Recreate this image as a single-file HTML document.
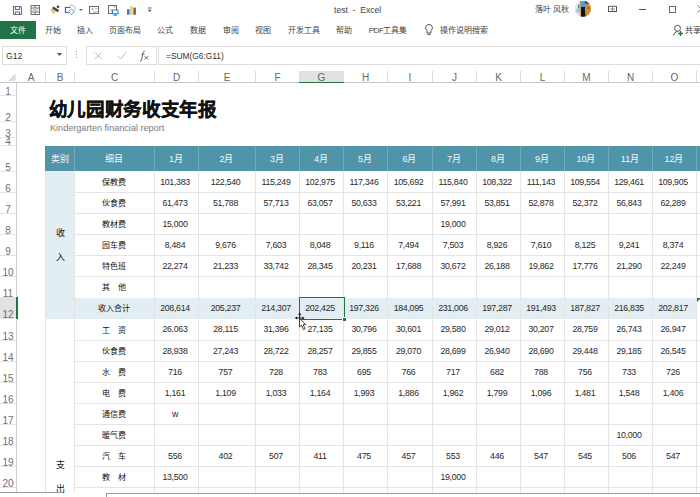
<!DOCTYPE html>
<html lang="zh-CN"><head><meta charset="utf-8">
<style>
*{margin:0;padding:0;box-sizing:border-box}
html,body{width:700px;height:497px;overflow:hidden;background:#fff}
body{position:relative;font-family:"Liberation Sans",sans-serif;color:#444}
.a{position:absolute}
.t{position:absolute;white-space:nowrap;line-height:1}
.vl{position:absolute;width:1px}
.hl{position:absolute;height:1px}
.c{position:absolute;display:flex;align-items:center;justify-content:center;white-space:nowrap}
.num{font-size:8.8px;color:#2a2a2a;letter-spacing:-0.3px;padding-right:2px}
.lab{font-size:8px;color:#111}
.hdr{font-size:9px;color:#f4f8fa}
.colh{font-size:10px;color:#666;padding-top:2.5px;padding-left:1px}
.rowh{font-size:10px;color:#707070}
.tab{position:absolute;top:25px;font-size:8.5px;color:#444;white-space:nowrap;line-height:1}
</style></head><body>

<div class="t" style="left:334px;top:5.5px;font-size:8.6px;color:#444">test&nbsp; -&nbsp; Excel</div>
<div class="t" style="left:535px;top:5.5px;font-size:8px;color:#444">落叶 风秋</div>
<svg class="a" style="left:575px;top:1px;display:block" width="16" height="16"><defs><clipPath id="av"><circle cx="8" cy="7.8" r="8"/></clipPath></defs>
<g clip-path="url(#av)"><rect width="16" height="16" fill="#d9b27a"/>
<rect x="0" y="0" width="5" height="16" fill="#dfe7ee"/>
<path d="M1 8 l3 -1 l1 3 l-3 2z" fill="#9cc3e6"/><path d="M3 4 l2 0 l0 2 l-2 1z" fill="#5a5a6a"/>
<path d="M3.5 2 L5 16 H8 L7 6 Z" fill="#d6a560"/>
<rect x="5.5" y="0" width="5" height="6.5" fill="#4b9de0"/>
<path d="M6 6 h4.5 l0.5 10 h-5z" fill="#151515"/>
<rect x="10" y="0" width="6" height="3" fill="#2a3550"/>
<path d="M10 2.5 q5 -0.5 6 4 v9 h-5.5 q-1 -6 -0.5 -13z" fill="#d48c3c"/>
<circle cx="13.5" cy="7" r="0.7" fill="#3a2a20"/>
</g></svg>
<svg class="a" style="left:608px;top:5px;display:block" width="10" height="8"><rect x="0.5" y="1.5" width="8" height="5" fill="none" stroke="#5a5258"/><line x1="0.5" y1="0.8" x2="8.5" y2="0.8" stroke="#c9d9d4"/><path d="M2 4 l1.5 -1 v2z M7 4 l-1.5 -1 v2z" fill="#777"/><line x1="4.5" y1="2" x2="4.5" y2="6" stroke="#666" stroke-width="0.8"/></svg>
<div class="a" style="left:639px;top:9px;width:7px;height:1px;background:#555"></div>
<div class="a" style="left:669px;top:6px;width:6.5px;height:6.5px;border:1px solid #6a6a6a"></div>
<svg class="a" style="left:697px;top:5px;display:block" width="8" height="8"><path d="M0.5 0.5L7.5 7.5M7.5 0.5L0.5 7.5" stroke="#777" stroke-width="0.9"/></svg>
<svg class="a" style="left:0;top:0;display:block" width="160" height="20">
<g fill="none" stroke="#6d6f85" stroke-width="1.1">
<path d="M13.5 6.5 h7 l1 1 v7 h-8z"/><path d="M15.5 6.5 v3 h4 v-3"/><path d="M15.5 14.5 v-2.5 h4 v2.5"/>
</g>
<g fill="none" stroke="#707070" stroke-width="1">
<rect x="31" y="5.5" width="8.5" height="9"/><line x1="31" y1="8" x2="39.5" y2="8"/><line x1="31" y1="12" x2="39.5" y2="12"/>
<line x1="35" y1="5.5" x2="35" y2="8"/><line x1="35" y1="12" x2="35" y2="14.5"/>
</g>
<line x1="32.5" y1="10" x2="38" y2="10" stroke="#6aa8dc" stroke-width="1"/>
<path d="M49.8 9.5 L53 8.6 L56 11.8 L53.4 14.6 Z" fill="#f0c986"/>
<path d="M53.6 8.2 L57.6 10.6" stroke="#46504e" stroke-width="2.6" stroke-linecap="round"/>
<circle cx="58" cy="6.8" r="1.3" fill="#3c3f48"/>
<path d="M70.5 7.5 h-5 v5 h3" fill="none" stroke="#2e68ad" stroke-width="1.2"/>
<path d="M69 6.5 a3.4 3.4 0 1 1 5.5 4" fill="none" stroke="#8cbde0" stroke-width="1"/>
<path d="M71.4 8.8 l2.9 2.9 l-2.9 2.9 l-2.9 -2.9z" fill="none" stroke="#4b8fcf" stroke-width="0.9"/>
<path d="M79 9 l2 2 l2 -2z" fill="#666"/>
<rect x="89.5" y="6.5" width="9" height="7" fill="none" stroke="#6b6b6b"/><path d="M91 9.5 l1.5 -1.5 l1.5 1.5z" fill="#4a8fd0"/><line x1="93" y1="12" x2="97.5" y2="12" stroke="#aaa"/><line x1="95" y1="8.5" x2="97.5" y2="8.5" stroke="#bbb"/>
<rect x="108.5" y="5.5" width="8" height="8" fill="none" stroke="#6b6b6b"/><rect x="113.5" y="6.3" width="2" height="1.5" fill="#f2b36b"/><rect x="110" y="9" width="2" height="3" fill="#b9d5ee"/>
<rect x="112.5" y="10" width="5.5" height="3.8" fill="#fff" stroke="#2f7fc4" stroke-width="1"/><line x1="115.2" y1="14" x2="115.2" y2="15.2" stroke="#2f7fc4"/><line x1="113.5" y1="15.2" x2="117" y2="15.2" stroke="#2f7fc4"/>
<rect x="127" y="9.2" width="2.6" height="5.5" fill="#3e7fbf"/><rect x="130.1" y="6" width="2.8" height="8.7" fill="#f0cf8c"/><rect x="133.4" y="7.6" width="2.5" height="7.1" fill="#5f6b6a"/>
<line x1="148" y1="8" x2="151.5" y2="8" stroke="#666"/><path d="M147.7 9.8 l2 2.2 l2 -2.2z" fill="#555"/>
</svg>
<div class="a" style="left:0;top:21px;width:36px;height:18px;background:#217346"></div>
<div class="t" style="left:9.5px;top:26.5px;font-size:8px;color:#fff">文件</div>
<div class="t" style="left:44.7px;top:26.5px;font-size:8px;color:#444;">开始</div>
<div class="t" style="left:76.7px;top:26.5px;font-size:8px;color:#444;">插入</div>
<div class="t" style="left:109.2px;top:26.5px;font-size:8px;color:#444;">页面布局</div>
<div class="t" style="left:157.2px;top:26.5px;font-size:8px;color:#444;">公式</div>
<div class="t" style="left:190.2px;top:26.5px;font-size:8px;color:#444;">数据</div>
<div class="t" style="left:223.2px;top:26.5px;font-size:8px;color:#444;">审阅</div>
<div class="t" style="left:255.2px;top:26.5px;font-size:8px;color:#444;">视图</div>
<div class="t" style="left:288.2px;top:26.5px;font-size:8px;color:#444;">开发工具</div>
<div class="t" style="left:336.2px;top:26.5px;font-size:8px;color:#444;">帮助</div>
<div class="t" style="left:368.7px;top:26.5px;font-size:8px;color:#444;letter-spacing:-0.4px;">PDF工具集</div>
<div class="t" style="left:440.2px;top:26.5px;font-size:8px;color:#444;">操作说明搜索</div>
<svg class="a" style="left:424px;top:23px" width="10" height="14"><path d="M5 1.5 a3.3 3.3 0 0 1 2 6 v2.5 h-4 v-2.5 a3.3 3.3 0 0 1 2 -6z" fill="none" stroke="#555"/><line x1="3.5" y1="11.5" x2="6.5" y2="11.5" stroke="#555"/></svg>
<svg class="a" style="left:672px;top:23px;display:block" width="14" height="14"><circle cx="5.5" cy="5.3" r="3" fill="none" stroke="#3c4650" stroke-width="0.9"/><path d="M1.3 12.5 q1 -3.5 4.2 -4.2" fill="none" stroke="#3c4650" stroke-width="0.9"/><path d="M8.5 8 v5 M6 10.5 h5" stroke="#217346" stroke-width="1.3"/></svg>
<div class="t" style="left:685px;top:26.5px;font-size:8px;color:#333">共享</div>
<div class="a" style="left:2px;top:46px;width:65px;height:19px;border:1px solid #dcdcdc;background:#fff"></div>
<div class="t" style="left:6px;top:52px;font-size:8.6px;color:#333">G12</div>
<svg class="a" style="left:57px;top:53px" width="6" height="4"><path d="M0 0 h5 l-2.5 3z" fill="#555"/></svg>
<div class="a" style="left:76px;top:51px;width:1px;height:9px;background:repeating-linear-gradient(#999 0 1px,transparent 1px 3px)"></div>
<div class="a" style="left:86px;top:46px;width:71px;height:19px;border:1px solid #dcdcdc;background:#fff"></div>
<svg class="a" style="left:94px;top:51px" width="60" height="10"><path d="M1 1.5 L7.5 8 M7.5 1.5 L1 8" stroke="#bdbdbd" stroke-width="1"/><path d="M23.5 5 L26.5 8 L32 1.5" fill="none" stroke="#bdbdbd" stroke-width="1"/></svg>
<svg class="a" style="left:139px;top:50px;display:block" width="12" height="12"><path d="M5.8 1.2 q-1.3 -0.3 -1.7 1.3 l-1.6 7.4 q-0.4 1.6 -1.6 1.2" fill="none" stroke="#555" stroke-width="0.9"/><line x1="2.5" y1="4.3" x2="5.8" y2="4.3" stroke="#555" stroke-width="0.8"/><path d="M5.5 6 l3.5 3.6 M9.2 6 l-3.8 3.6" stroke="#666" stroke-width="0.9"/></svg>
<div class="a" style="left:158px;top:46px;width:560px;height:19px;border:1px solid #dcdcdc;background:#fff"></div>
<div class="t" style="left:166px;top:52px;font-size:8.4px;color:#333">=SUM(G6:G11)</div>
<svg class="a" style="left:7px;top:73px;display:block" width="10" height="9"><path d="M8.5 0.5 V8 H1z" fill="#dcdcdc"/></svg>
<div class="hl" style="left:0;top:82px;width:700px;background:#c6c6c6"></div>
<div class="vl" style="left:45px;top:71px;height:11px;background:#dadada"></div>
<div class="vl" style="left:74px;top:71px;height:11px;background:#dadada"></div>
<div class="vl" style="left:154px;top:71px;height:11px;background:#dadada"></div>
<div class="vl" style="left:198px;top:71px;height:11px;background:#dadada"></div>
<div class="vl" style="left:255px;top:71px;height:11px;background:#dadada"></div>
<div class="vl" style="left:299px;top:71px;height:11px;background:#dadada"></div>
<div class="vl" style="left:343px;top:71px;height:11px;background:#dadada"></div>
<div class="vl" style="left:387px;top:71px;height:11px;background:#dadada"></div>
<div class="vl" style="left:432px;top:71px;height:11px;background:#dadada"></div>
<div class="vl" style="left:476px;top:71px;height:11px;background:#dadada"></div>
<div class="vl" style="left:520px;top:71px;height:11px;background:#dadada"></div>
<div class="vl" style="left:564px;top:71px;height:11px;background:#dadada"></div>
<div class="vl" style="left:608px;top:71px;height:11px;background:#dadada"></div>
<div class="vl" style="left:652px;top:71px;height:11px;background:#dadada"></div>
<div class="vl" style="left:696px;top:71px;height:11px;background:#dadada"></div>
<div class="a" style="left:299.2px;top:71px;width:44.5px;height:12px;background:#e1e1e1;border-bottom:1.5px solid #217346"></div>
<div class="c colh" style="left:16px;top:71px;width:29px;height:11px">A</div>
<div class="c colh" style="left:45px;top:71px;width:29px;height:11px">B</div>
<div class="c colh" style="left:74px;top:71px;width:80px;height:11px">C</div>
<div class="c colh" style="left:154px;top:71px;width:44px;height:11px">D</div>
<div class="c colh" style="left:198px;top:71px;width:57px;height:11px">E</div>
<div class="c colh" style="left:255px;top:71px;width:44px;height:11px">F</div>
<div class="c colh" style="left:299px;top:71px;width:44px;height:11px">G</div>
<div class="c colh" style="left:343px;top:71px;width:44px;height:11px">H</div>
<div class="c colh" style="left:387px;top:71px;width:45px;height:11px">I</div>
<div class="c colh" style="left:432px;top:71px;width:44px;height:11px">J</div>
<div class="c colh" style="left:476px;top:71px;width:44px;height:11px">K</div>
<div class="c colh" style="left:520px;top:71px;width:44px;height:11px">L</div>
<div class="c colh" style="left:564px;top:71px;width:44px;height:11px">M</div>
<div class="c colh" style="left:608px;top:71px;width:44px;height:11px">N</div>
<div class="c colh" style="left:652px;top:71px;width:44px;height:11px">O</div>
<div class="c colh" style="left:696px;top:71px;width:44px;height:11px">P</div>
<div class="vl" style="left:16px;top:82px;height:420px;background:#cdcdcd"></div>
<div class="a" style="left:0;top:298px;width:16px;height:21px;background:#e1e1e1"></div>
<div class="hl" style="left:0;top:95px;width:16px;background:#e4e4e4"></div>
<div class="t rowh" style="left:0;width:16px;text-align:center;top:86.5px">1</div>
<div class="hl" style="left:0;top:121px;width:16px;background:#e4e4e4"></div>
<div class="t rowh" style="left:0;width:16px;text-align:center;top:112.5px">2</div>
<div class="hl" style="left:0;top:137px;width:16px;background:#e4e4e4"></div>
<div class="t rowh" style="left:0;width:16px;text-align:center;top:128.5px">3</div>
<div class="hl" style="left:0;top:145px;width:16px;background:#e4e4e4"></div>
<div class="t rowh" style="left:0;width:16px;text-align:center;top:136.5px">4</div>
<div class="hl" style="left:0;top:171px;width:16px;background:#e4e4e4"></div>
<div class="t rowh" style="left:0;width:16px;text-align:center;top:162.5px">5</div>
<div class="hl" style="left:0;top:192px;width:16px;background:#e4e4e4"></div>
<div class="t rowh" style="left:0;width:16px;text-align:center;top:183.5px">6</div>
<div class="hl" style="left:0;top:213px;width:16px;background:#e4e4e4"></div>
<div class="t rowh" style="left:0;width:16px;text-align:center;top:204.5px">7</div>
<div class="hl" style="left:0;top:234px;width:16px;background:#e4e4e4"></div>
<div class="t rowh" style="left:0;width:16px;text-align:center;top:225.5px">8</div>
<div class="hl" style="left:0;top:255px;width:16px;background:#e4e4e4"></div>
<div class="t rowh" style="left:0;width:16px;text-align:center;top:246.5px">9</div>
<div class="hl" style="left:0;top:276px;width:16px;background:#e4e4e4"></div>
<div class="t rowh" style="left:0;width:16px;text-align:center;top:267.5px">10</div>
<div class="hl" style="left:0;top:297px;width:16px;background:#e4e4e4"></div>
<div class="t rowh" style="left:0;width:16px;text-align:center;top:288.5px">11</div>
<div class="hl" style="left:0;top:318px;width:16px;background:#e4e4e4"></div>
<div class="t rowh" style="left:0;width:16px;text-align:center;top:309.5px">12</div>
<div class="hl" style="left:0;top:340px;width:16px;background:#e4e4e4"></div>
<div class="t rowh" style="left:0;width:16px;text-align:center;top:331.5px">13</div>
<div class="hl" style="left:0;top:361px;width:16px;background:#e4e4e4"></div>
<div class="t rowh" style="left:0;width:16px;text-align:center;top:352.5px">14</div>
<div class="hl" style="left:0;top:382px;width:16px;background:#e4e4e4"></div>
<div class="t rowh" style="left:0;width:16px;text-align:center;top:373.5px">15</div>
<div class="hl" style="left:0;top:403px;width:16px;background:#e4e4e4"></div>
<div class="t rowh" style="left:0;width:16px;text-align:center;top:394.5px">16</div>
<div class="hl" style="left:0;top:424px;width:16px;background:#e4e4e4"></div>
<div class="t rowh" style="left:0;width:16px;text-align:center;top:415.5px">17</div>
<div class="hl" style="left:0;top:445px;width:16px;background:#e4e4e4"></div>
<div class="t rowh" style="left:0;width:16px;text-align:center;top:436.5px">18</div>
<div class="hl" style="left:0;top:466px;width:16px;background:#e4e4e4"></div>
<div class="t rowh" style="left:0;width:16px;text-align:center;top:457.5px">19</div>
<div class="hl" style="left:0;top:487px;width:16px;background:#e4e4e4"></div>
<div class="t rowh" style="left:0;width:16px;text-align:center;top:478.5px">20</div>
<div class="hl" style="left:0;top:508px;width:16px;background:#e4e4e4"></div>
<div class="t rowh" style="left:0;width:16px;text-align:center;top:499.5px">21</div>
<div class="t" style="left:48.5px;top:101px;font-size:18.5px;font-weight:bold;color:#111;letter-spacing:-0.3px;-webkit-text-stroke:0.35px #111">幼儿园财务收支年报</div>
<div class="t" style="left:50px;top:124px;font-size:9.1px;color:#7a7a7a">Kindergarten financial report</div>
<div class="a" style="left:45px;top:146px;width:655px;height:25px;background:#4f94a9"></div>
<div class="vl" style="left:74px;top:146px;height:25px;background:#74aabb"></div>
<div class="vl" style="left:154px;top:146px;height:25px;background:#74aabb"></div>
<div class="vl" style="left:198px;top:146px;height:25px;background:#74aabb"></div>
<div class="vl" style="left:255px;top:146px;height:25px;background:#74aabb"></div>
<div class="vl" style="left:299px;top:146px;height:25px;background:#74aabb"></div>
<div class="vl" style="left:343px;top:146px;height:25px;background:#74aabb"></div>
<div class="vl" style="left:387px;top:146px;height:25px;background:#74aabb"></div>
<div class="vl" style="left:432px;top:146px;height:25px;background:#74aabb"></div>
<div class="vl" style="left:476px;top:146px;height:25px;background:#74aabb"></div>
<div class="vl" style="left:520px;top:146px;height:25px;background:#74aabb"></div>
<div class="vl" style="left:564px;top:146px;height:25px;background:#74aabb"></div>
<div class="vl" style="left:608px;top:146px;height:25px;background:#74aabb"></div>
<div class="vl" style="left:652px;top:146px;height:25px;background:#74aabb"></div>
<div class="vl" style="left:696px;top:146px;height:25px;background:#74aabb"></div>
<div class="c hdr" style="left:45px;top:146px;width:29px;height:25px">类别</div>
<div class="c hdr" style="left:74px;top:146px;width:80px;height:25px">细目</div>
<div class="c hdr" style="left:154px;top:146px;width:44px;height:25px">1月</div>
<div class="c hdr" style="left:198px;top:146px;width:57px;height:25px">2月</div>
<div class="c hdr" style="left:255px;top:146px;width:44px;height:25px">3月</div>
<div class="c hdr" style="left:299px;top:146px;width:44px;height:25px">4月</div>
<div class="c hdr" style="left:343px;top:146px;width:44px;height:25px">5月</div>
<div class="c hdr" style="left:387px;top:146px;width:45px;height:25px">6月</div>
<div class="c hdr" style="left:432px;top:146px;width:44px;height:25px">7月</div>
<div class="c hdr" style="left:476px;top:146px;width:44px;height:25px">8月</div>
<div class="c hdr" style="left:520px;top:146px;width:44px;height:25px">9月</div>
<div class="c hdr" style="left:564px;top:146px;width:44px;height:25px">10月</div>
<div class="c hdr" style="left:608px;top:146px;width:44px;height:25px">11月</div>
<div class="c hdr" style="left:652px;top:146px;width:44px;height:25px">12月</div>
<div class="a" style="left:45px;top:171px;width:29px;height:148px;background:#e3eef3"></div>
<div class="hl" style="left:74px;top:192px;width:626px;background:#e4e4e4"></div>
<div class="hl" style="left:74px;top:213px;width:626px;background:#e4e4e4"></div>
<div class="hl" style="left:74px;top:234px;width:626px;background:#e4e4e4"></div>
<div class="hl" style="left:74px;top:255px;width:626px;background:#e4e4e4"></div>
<div class="hl" style="left:74px;top:276px;width:626px;background:#e4e4e4"></div>
<div class="hl" style="left:74px;top:340px;width:626px;background:#e4e4e4"></div>
<div class="hl" style="left:74px;top:361px;width:626px;background:#e4e4e4"></div>
<div class="hl" style="left:74px;top:382px;width:626px;background:#e4e4e4"></div>
<div class="hl" style="left:74px;top:403px;width:626px;background:#e4e4e4"></div>
<div class="hl" style="left:74px;top:424px;width:626px;background:#e4e4e4"></div>
<div class="hl" style="left:74px;top:445px;width:626px;background:#e4e4e4"></div>
<div class="hl" style="left:74px;top:466px;width:626px;background:#e4e4e4"></div>
<div class="hl" style="left:74px;top:487px;width:626px;background:#e4e4e4"></div>
<div class="hl" style="left:74px;top:508px;width:626px;background:#e4e4e4"></div>
<div class="vl" style="left:45px;top:171px;height:330px;background:#e4e4e4"></div>
<div class="vl" style="left:74px;top:171px;height:330px;background:#e4e4e4"></div>
<div class="vl" style="left:154px;top:171px;height:330px;background:#e4e4e4"></div>
<div class="vl" style="left:198px;top:171px;height:330px;background:#e4e4e4"></div>
<div class="vl" style="left:255px;top:171px;height:330px;background:#e4e4e4"></div>
<div class="vl" style="left:299px;top:171px;height:330px;background:#e4e4e4"></div>
<div class="vl" style="left:343px;top:171px;height:330px;background:#e4e4e4"></div>
<div class="vl" style="left:387px;top:171px;height:330px;background:#e4e4e4"></div>
<div class="vl" style="left:432px;top:171px;height:330px;background:#e4e4e4"></div>
<div class="vl" style="left:476px;top:171px;height:330px;background:#e4e4e4"></div>
<div class="vl" style="left:520px;top:171px;height:330px;background:#e4e4e4"></div>
<div class="vl" style="left:564px;top:171px;height:330px;background:#e4e4e4"></div>
<div class="vl" style="left:608px;top:171px;height:330px;background:#e4e4e4"></div>
<div class="vl" style="left:652px;top:171px;height:330px;background:#e4e4e4"></div>
<div class="vl" style="left:696px;top:171px;height:330px;background:#e4e4e4"></div>
<div class="a" style="left:75px;top:298px;width:621px;height:21px;background:#e3eef3"></div>
<div class="vl" style="left:154px;top:298px;height:21px;background:#e2e5e7"></div>
<div class="vl" style="left:198px;top:298px;height:21px;background:#e2e5e7"></div>
<div class="vl" style="left:255px;top:298px;height:21px;background:#e2e5e7"></div>
<div class="vl" style="left:299px;top:298px;height:21px;background:#e2e5e7"></div>
<div class="vl" style="left:343px;top:298px;height:21px;background:#e2e5e7"></div>
<div class="vl" style="left:387px;top:298px;height:21px;background:#e2e5e7"></div>
<div class="vl" style="left:432px;top:298px;height:21px;background:#e2e5e7"></div>
<div class="vl" style="left:476px;top:298px;height:21px;background:#e2e5e7"></div>
<div class="vl" style="left:520px;top:298px;height:21px;background:#e2e5e7"></div>
<div class="vl" style="left:564px;top:298px;height:21px;background:#e2e5e7"></div>
<div class="vl" style="left:608px;top:298px;height:21px;background:#e2e5e7"></div>
<div class="vl" style="left:652px;top:298px;height:21px;background:#e2e5e7"></div>
<svg class="a" style="left:697px;top:298px;display:block" width="5" height="5"><path d="M0 0 h4 L0 4z" fill="#1e7a3c"/></svg>
<div class="t lab" style="left:55.5px;top:228.5px;font-size:9px">收</div>
<div class="t lab" style="left:55.5px;top:252.5px;font-size:9px">入</div>
<div class="t lab" style="left:55.5px;top:460.5px;font-size:9px">支</div>
<div class="t lab" style="left:55.5px;top:484.5px;font-size:9px">出</div>
<div class="c lab" style="left:74px;top:171px;width:80px;height:21px">保教费</div>
<div class="c num" style="left:154px;top:171px;width:44px;height:21px">101,383</div>
<div class="c num" style="left:198px;top:171px;width:57px;height:21px">122,540</div>
<div class="c num" style="left:255px;top:171px;width:44px;height:21px">115,249</div>
<div class="c num" style="left:299px;top:171px;width:44px;height:21px">102,975</div>
<div class="c num" style="left:343px;top:171px;width:44px;height:21px">117,346</div>
<div class="c num" style="left:387px;top:171px;width:45px;height:21px">105,692</div>
<div class="c num" style="left:432px;top:171px;width:44px;height:21px">115,840</div>
<div class="c num" style="left:476px;top:171px;width:44px;height:21px">108,322</div>
<div class="c num" style="left:520px;top:171px;width:44px;height:21px">111,143</div>
<div class="c num" style="left:564px;top:171px;width:44px;height:21px">109,554</div>
<div class="c num" style="left:608px;top:171px;width:44px;height:21px">129,461</div>
<div class="c num" style="left:652px;top:171px;width:44px;height:21px">109,905</div>
<div class="c lab" style="left:74px;top:192px;width:80px;height:21px">伙食费</div>
<div class="c num" style="left:154px;top:192px;width:44px;height:21px">61,473</div>
<div class="c num" style="left:198px;top:192px;width:57px;height:21px">51,788</div>
<div class="c num" style="left:255px;top:192px;width:44px;height:21px">57,713</div>
<div class="c num" style="left:299px;top:192px;width:44px;height:21px">63,057</div>
<div class="c num" style="left:343px;top:192px;width:44px;height:21px">50,633</div>
<div class="c num" style="left:387px;top:192px;width:45px;height:21px">53,221</div>
<div class="c num" style="left:432px;top:192px;width:44px;height:21px">57,991</div>
<div class="c num" style="left:476px;top:192px;width:44px;height:21px">53,851</div>
<div class="c num" style="left:520px;top:192px;width:44px;height:21px">52,878</div>
<div class="c num" style="left:564px;top:192px;width:44px;height:21px">52,372</div>
<div class="c num" style="left:608px;top:192px;width:44px;height:21px">56,843</div>
<div class="c num" style="left:652px;top:192px;width:44px;height:21px">62,289</div>
<div class="c lab" style="left:74px;top:213px;width:80px;height:21px">教材费</div>
<div class="c num" style="left:154px;top:213px;width:44px;height:21px">15,000</div>
<div class="c num" style="left:432px;top:213px;width:44px;height:21px">19,000</div>
<div class="c lab" style="left:74px;top:234px;width:80px;height:21px">园车费</div>
<div class="c num" style="left:154px;top:234px;width:44px;height:21px">8,484</div>
<div class="c num" style="left:198px;top:234px;width:57px;height:21px">9,676</div>
<div class="c num" style="left:255px;top:234px;width:44px;height:21px">7,603</div>
<div class="c num" style="left:299px;top:234px;width:44px;height:21px">8,048</div>
<div class="c num" style="left:343px;top:234px;width:44px;height:21px">9,116</div>
<div class="c num" style="left:387px;top:234px;width:45px;height:21px">7,494</div>
<div class="c num" style="left:432px;top:234px;width:44px;height:21px">7,503</div>
<div class="c num" style="left:476px;top:234px;width:44px;height:21px">8,926</div>
<div class="c num" style="left:520px;top:234px;width:44px;height:21px">7,610</div>
<div class="c num" style="left:564px;top:234px;width:44px;height:21px">8,125</div>
<div class="c num" style="left:608px;top:234px;width:44px;height:21px">9,241</div>
<div class="c num" style="left:652px;top:234px;width:44px;height:21px">8,374</div>
<div class="c lab" style="left:74px;top:255px;width:80px;height:21px">特色班</div>
<div class="c num" style="left:154px;top:255px;width:44px;height:21px">22,274</div>
<div class="c num" style="left:198px;top:255px;width:57px;height:21px">21,233</div>
<div class="c num" style="left:255px;top:255px;width:44px;height:21px">33,742</div>
<div class="c num" style="left:299px;top:255px;width:44px;height:21px">28,345</div>
<div class="c num" style="left:343px;top:255px;width:44px;height:21px">20,231</div>
<div class="c num" style="left:387px;top:255px;width:45px;height:21px">17,688</div>
<div class="c num" style="left:432px;top:255px;width:44px;height:21px">30,672</div>
<div class="c num" style="left:476px;top:255px;width:44px;height:21px">26,188</div>
<div class="c num" style="left:520px;top:255px;width:44px;height:21px">19,862</div>
<div class="c num" style="left:564px;top:255px;width:44px;height:21px">17,776</div>
<div class="c num" style="left:608px;top:255px;width:44px;height:21px">21,290</div>
<div class="c num" style="left:652px;top:255px;width:44px;height:21px">22,249</div>
<div class="c lab" style="left:74px;top:276px;width:80px;height:21px">其　他</div>
<div class="c lab" style="left:74px;top:297px;width:80px;height:21px">收入合计</div>
<div class="c num" style="left:154px;top:297px;width:44px;height:21px">208,614</div>
<div class="c num" style="left:198px;top:297px;width:57px;height:21px">205,237</div>
<div class="c num" style="left:255px;top:297px;width:44px;height:21px">214,307</div>
<div class="c num" style="left:299px;top:297px;width:44px;height:21px">202,425</div>
<div class="c num" style="left:343px;top:297px;width:44px;height:21px">197,326</div>
<div class="c num" style="left:387px;top:297px;width:45px;height:21px">184,095</div>
<div class="c num" style="left:432px;top:297px;width:44px;height:21px">231,006</div>
<div class="c num" style="left:476px;top:297px;width:44px;height:21px">197,287</div>
<div class="c num" style="left:520px;top:297px;width:44px;height:21px">191,493</div>
<div class="c num" style="left:564px;top:297px;width:44px;height:21px">187,827</div>
<div class="c num" style="left:608px;top:297px;width:44px;height:21px">216,835</div>
<div class="c num" style="left:652px;top:297px;width:44px;height:21px">202,817</div>
<div class="c lab" style="left:74px;top:318px;width:80px;height:22px">工　资</div>
<div class="c num" style="left:154px;top:318px;width:44px;height:22px">26,063</div>
<div class="c num" style="left:198px;top:318px;width:57px;height:22px">28,115</div>
<div class="c num" style="left:255px;top:318px;width:44px;height:22px">31,396</div>
<div class="c num" style="left:299px;top:318px;width:44px;height:22px">27,135</div>
<div class="c num" style="left:343px;top:318px;width:44px;height:22px">30,796</div>
<div class="c num" style="left:387px;top:318px;width:45px;height:22px">30,601</div>
<div class="c num" style="left:432px;top:318px;width:44px;height:22px">29,580</div>
<div class="c num" style="left:476px;top:318px;width:44px;height:22px">29,012</div>
<div class="c num" style="left:520px;top:318px;width:44px;height:22px">30,207</div>
<div class="c num" style="left:564px;top:318px;width:44px;height:22px">28,759</div>
<div class="c num" style="left:608px;top:318px;width:44px;height:22px">26,743</div>
<div class="c num" style="left:652px;top:318px;width:44px;height:22px">26,947</div>
<div class="c lab" style="left:74px;top:340px;width:80px;height:21px">伙食费</div>
<div class="c num" style="left:154px;top:340px;width:44px;height:21px">28,938</div>
<div class="c num" style="left:198px;top:340px;width:57px;height:21px">27,243</div>
<div class="c num" style="left:255px;top:340px;width:44px;height:21px">28,722</div>
<div class="c num" style="left:299px;top:340px;width:44px;height:21px">28,257</div>
<div class="c num" style="left:343px;top:340px;width:44px;height:21px">29,855</div>
<div class="c num" style="left:387px;top:340px;width:45px;height:21px">29,070</div>
<div class="c num" style="left:432px;top:340px;width:44px;height:21px">28,699</div>
<div class="c num" style="left:476px;top:340px;width:44px;height:21px">26,940</div>
<div class="c num" style="left:520px;top:340px;width:44px;height:21px">28,690</div>
<div class="c num" style="left:564px;top:340px;width:44px;height:21px">29,448</div>
<div class="c num" style="left:608px;top:340px;width:44px;height:21px">29,185</div>
<div class="c num" style="left:652px;top:340px;width:44px;height:21px">26,545</div>
<div class="c lab" style="left:74px;top:361px;width:80px;height:21px">水　费</div>
<div class="c num" style="left:154px;top:361px;width:44px;height:21px">716</div>
<div class="c num" style="left:198px;top:361px;width:57px;height:21px">757</div>
<div class="c num" style="left:255px;top:361px;width:44px;height:21px">728</div>
<div class="c num" style="left:299px;top:361px;width:44px;height:21px">783</div>
<div class="c num" style="left:343px;top:361px;width:44px;height:21px">695</div>
<div class="c num" style="left:387px;top:361px;width:45px;height:21px">766</div>
<div class="c num" style="left:432px;top:361px;width:44px;height:21px">717</div>
<div class="c num" style="left:476px;top:361px;width:44px;height:21px">682</div>
<div class="c num" style="left:520px;top:361px;width:44px;height:21px">788</div>
<div class="c num" style="left:564px;top:361px;width:44px;height:21px">756</div>
<div class="c num" style="left:608px;top:361px;width:44px;height:21px">733</div>
<div class="c num" style="left:652px;top:361px;width:44px;height:21px">726</div>
<div class="c lab" style="left:74px;top:382px;width:80px;height:21px">电　费</div>
<div class="c num" style="left:154px;top:382px;width:44px;height:21px">1,161</div>
<div class="c num" style="left:198px;top:382px;width:57px;height:21px">1,109</div>
<div class="c num" style="left:255px;top:382px;width:44px;height:21px">1,033</div>
<div class="c num" style="left:299px;top:382px;width:44px;height:21px">1,164</div>
<div class="c num" style="left:343px;top:382px;width:44px;height:21px">1,993</div>
<div class="c num" style="left:387px;top:382px;width:45px;height:21px">1,886</div>
<div class="c num" style="left:432px;top:382px;width:44px;height:21px">1,962</div>
<div class="c num" style="left:476px;top:382px;width:44px;height:21px">1,799</div>
<div class="c num" style="left:520px;top:382px;width:44px;height:21px">1,096</div>
<div class="c num" style="left:564px;top:382px;width:44px;height:21px">1,481</div>
<div class="c num" style="left:608px;top:382px;width:44px;height:21px">1,548</div>
<div class="c num" style="left:652px;top:382px;width:44px;height:21px">1,406</div>
<div class="c lab" style="left:74px;top:403px;width:80px;height:21px">通信费</div>
<div class="c num" style="left:154px;top:403px;width:44px;height:21px">w</div>
<div class="c lab" style="left:74px;top:424px;width:80px;height:21px">暖气费</div>
<div class="c num" style="left:608px;top:424px;width:44px;height:21px">10,000</div>
<div class="c lab" style="left:74px;top:445px;width:80px;height:21px">汽　车</div>
<div class="c num" style="left:154px;top:445px;width:44px;height:21px">556</div>
<div class="c num" style="left:198px;top:445px;width:57px;height:21px">402</div>
<div class="c num" style="left:255px;top:445px;width:44px;height:21px">507</div>
<div class="c num" style="left:299px;top:445px;width:44px;height:21px">411</div>
<div class="c num" style="left:343px;top:445px;width:44px;height:21px">475</div>
<div class="c num" style="left:387px;top:445px;width:45px;height:21px">457</div>
<div class="c num" style="left:432px;top:445px;width:44px;height:21px">553</div>
<div class="c num" style="left:476px;top:445px;width:44px;height:21px">446</div>
<div class="c num" style="left:520px;top:445px;width:44px;height:21px">547</div>
<div class="c num" style="left:564px;top:445px;width:44px;height:21px">545</div>
<div class="c num" style="left:608px;top:445px;width:44px;height:21px">506</div>
<div class="c num" style="left:652px;top:445px;width:44px;height:21px">547</div>
<div class="c lab" style="left:74px;top:466px;width:80px;height:21px">教　材</div>
<div class="c num" style="left:154px;top:466px;width:44px;height:21px">13,500</div>
<div class="c num" style="left:432px;top:466px;width:44px;height:21px">19,000</div>
<div class="a" style="left:16px;top:297px;width:1.5px;height:22px;background:#217346"></div>
<div class="a" style="left:299px;top:297px;width:46px;height:23px;border:1.6px solid #217346"></div>
<div class="a" style="left:341.5px;top:316.5px;width:5px;height:5px;background:#217346;border:1px solid #fff"></div>
<svg class="a" style="left:293px;top:311px;display:block" width="20" height="22">
<path d="M6.7 1.5 l-1.6 2.2 h3.2z M1.8 7 l2.2 -1.6 v3.2z M11.6 7 l-2.2 -1.6 v3.2z" fill="#111"/>
<path d="M6.7 3.5 v4 M3.5 7 h6.5" stroke="#111" stroke-width="0.9"/>
<path d="M6.5 7.3 L6.5 16 L8.4 14.3 L10.4 18.6 L12 17.9 L10.1 13.7 L12.8 13.7 Z" fill="#fff" stroke="#111" stroke-width="0.8" stroke-linejoin="round"/>
</svg>
<div class="a" style="left:0;top:492px;width:63px;height:1px;background:#9a9a9a"></div>
<div class="a" style="left:0;top:493px;width:106px;height:4px;background:#fff"></div>
<div class="a" style="left:106px;top:493px;width:600px;height:10px;background:#fff;border-top:1px solid #9a9a9a;border-left:1px solid #9a9a9a"></div>
</body></html>
